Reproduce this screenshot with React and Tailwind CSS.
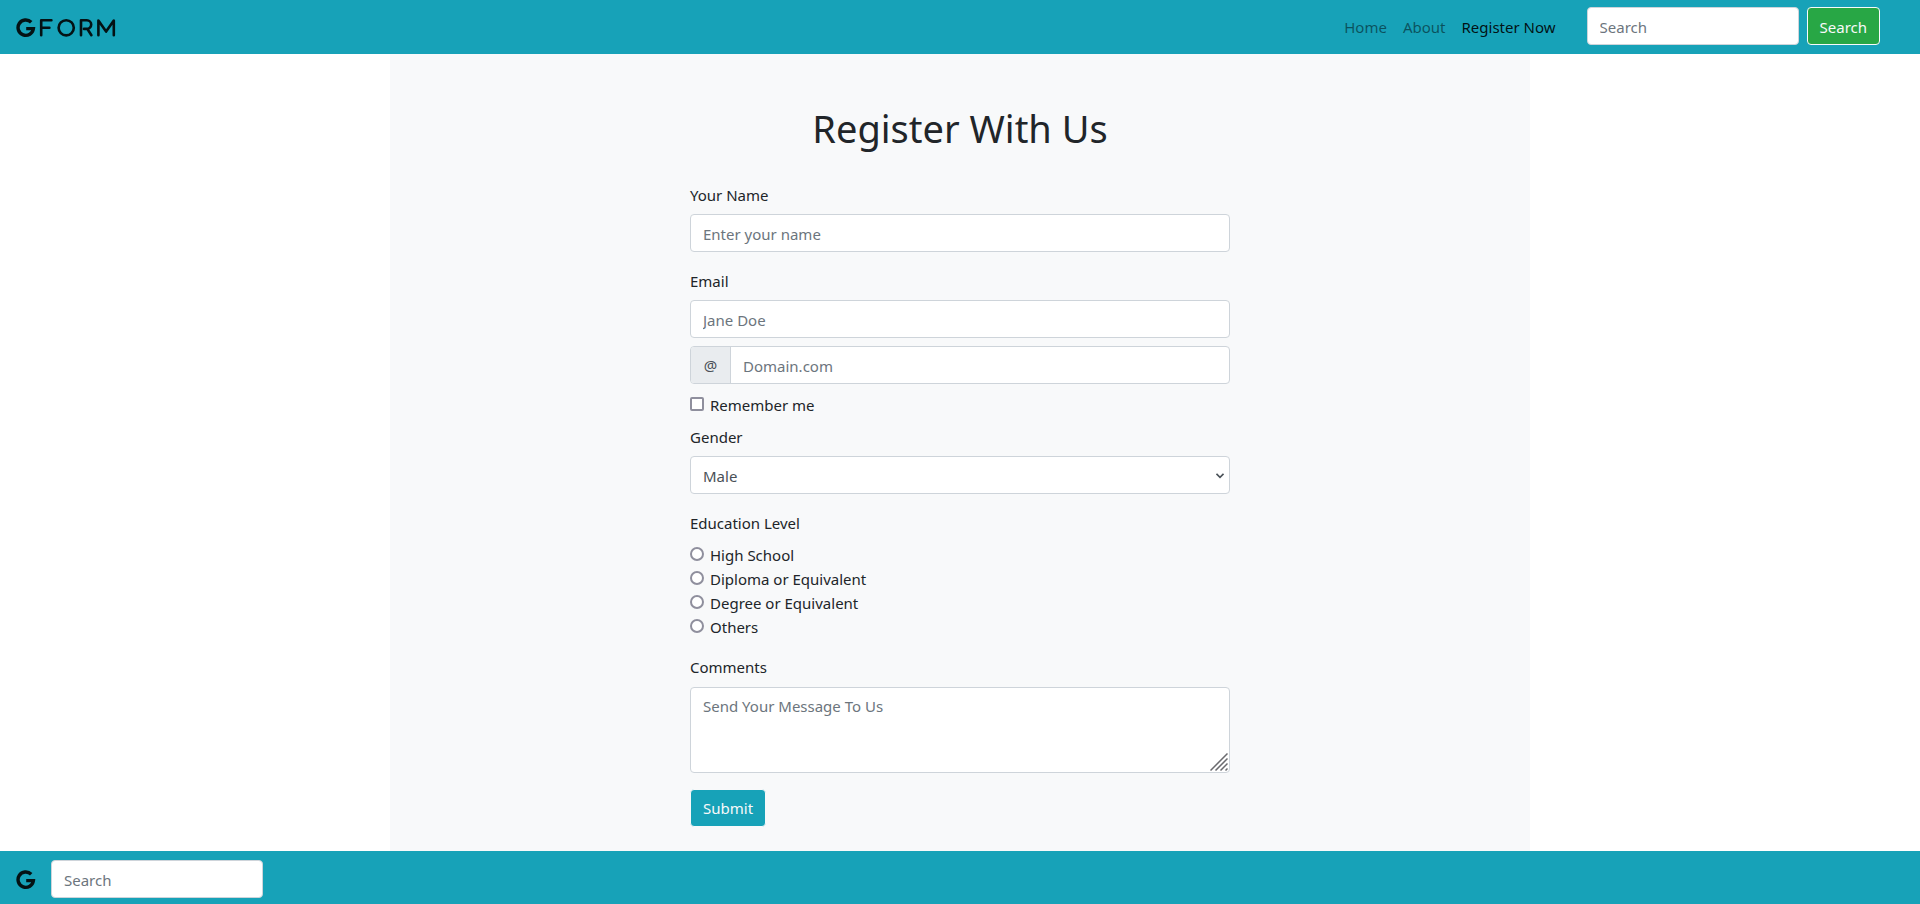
const control =
  'block w-full rounded border border-[#ced4da] bg-white px-3 pt-[7px] pb-[5px] h-[38px] text-[15px] leading-6 text-[#495057] placeholder:text-[#6c757d] placeholder:opacity-100';

const labelStyle = 'mb-[7px] block pt-px leading-6';

const levels = ['High School', 'Diploma or Equivalent', 'Degree or Equivalent', 'Others'];

function GMark() {
  return (
    <path
      d="M15.2 4.2A7.7 7.7 0 1 0 17.4 10.6H10.2"
      fill="none"
      stroke="#041214"
      strokeWidth="3.4"
    />
  );
}

function Logo() {
  return (
    <svg width="100" height="20" viewBox="0 0 100 20" role="img" aria-label="GForm">
      <GMark />
      <g fill="none" stroke="#041214" strokeWidth="2.6" strokeLinecap="round" strokeLinejoin="round">
        <path d="M35.4 2.3H25.2V17.2M25.2 9.8H33.4" />
        <circle cx="50.2" cy="9.8" r="7.6" />
        <path d="M65 17.2V2.3H70.9A4.2 4.2 0 0 1 70.9 10.9H68M71.6 11.2L75.4 17.2" />
        <path d="M82.4 17.2V2.6L90.1 13.6L97.8 2.6V17.2" />
      </g>
    </svg>
  );
}

export default function App() {
  return (
    <div className="flex min-h-screen flex-col bg-white font-['Noto_Sans','Open_Sans',sans-serif] text-[15px] leading-6 text-[#212529]">
      <header className="flex items-center justify-between bg-[#17a2b8] pt-[7px] pr-10 pb-[9px] pl-4">
        <a href="#home" aria-label="GForm home" className="pt-1">
          <Logo />
        </a>
        <div className="flex items-center">
          <nav className="mr-[31px] flex gap-4 pt-[2px]">
            <a href="#home" className="text-black/50">Home</a>
            <a href="#about" className="text-black/50">About</a>
            <a href="#register" className="text-black/90">Register Now</a>
          </nav>
          <form className="flex items-center gap-2">
            <div className="w-[212px]">
              <input type="search" aria-label="Search" placeholder="Search" className={control} />
            </div>
            <button
              type="button"
              className="h-[38px] rounded border border-[#f8f9fa] bg-[#28a745] px-3 pt-[2px] text-[#f8f9fa]"
            >
              Search
            </button>
          </form>
        </div>
      </header>

      <main className="mx-auto w-full max-w-[1140px] flex-1 bg-[#f8f9fa] pt-[50px] pb-6">
        <h1 className="mb-[30px] text-center text-[38px] leading-[48px]">Register With Us</h1>
        <form className="mx-auto w-full max-w-[540px]">
          <div className="mb-4">
            <label htmlFor="name" className={labelStyle}>Your Name</label>
            <input id="name" type="text" placeholder="Enter your name" className={control} />
          </div>

          <label htmlFor="email" className={labelStyle}>Email</label>
          <input id="email" type="text" placeholder="Jane Doe" className={control} />
          <div className="mt-2 flex h-[38px] overflow-hidden rounded border border-[#ced4da] bg-white">
            <label
              htmlFor="domain"
              className="flex w-10 items-center justify-center border-r border-[#ced4da] bg-[#e9ecef] text-[#495057]"
            >
              @
            </label>
            <input
              id="domain"
              type="text"
              placeholder="Domain.com"
              className="min-w-0 flex-1 px-3 pt-[2px] text-[15px] text-[#495057] placeholder:text-[#6c757d] placeholder:opacity-100"
            />
          </div>

          <div className="mt-2 mb-[7px] flex items-start gap-[6px]">
            <input
              id="remember"
              type="checkbox"
              className="mt-[5px] size-[14px] appearance-none rounded-[2px] border-2 border-[#8f8f9d] bg-white checked:bg-[#17a2b8]"
            />
            <label htmlFor="remember" className="pt-px">Remember me</label>
          </div>

          <label htmlFor="gender" className={labelStyle}>Gender</label>
          <div className="relative mb-4">
            <select id="gender" className={`${control} appearance-none`}>
              <option>Male</option>
              <option>Female</option>
            </select>
            <svg
              className="pointer-events-none absolute top-[17px] right-[6px]"
              width="8"
              height="6"
              viewBox="0 0 8 6"
              fill="none"
              stroke="#495057"
              strokeWidth="1.6"
            >
              <path d="M0.5 0.8L4 4.3L7.5 0.8" />
            </svg>
          </div>

          <fieldset className="mb-4">
            <legend className={labelStyle}>Education Level</legend>
            {levels.map((level) => (
              <div key={level} className="flex h-6 items-start gap-[6px]">
                <input
                  id={level}
                  type="radio"
                  name="education"
                  className="mt-[5px] size-[14px] appearance-none rounded-full border-2 border-[#8f8f9d] bg-white checked:bg-[#17a2b8]"
                />
                <label htmlFor={level} className="pt-px">{level}</label>
              </div>
            ))}
          </fieldset>

          <label htmlFor="comments" className="mb-2 block pt-px">Comments</label>
          <div className="relative mb-4">
            <textarea
              id="comments"
              placeholder="Send Your Message To Us"
              className="block h-[86px] w-full resize-none rounded border border-[#ced4da] bg-white px-3 py-[6px] leading-6 placeholder:text-[#6c757d] placeholder:opacity-100"
            />
            <svg
              className="pointer-events-none absolute right-[2px] bottom-[2px]"
              width="18"
              height="18"
              viewBox="0 0 18 18"
              stroke="#6b6b6f"
              strokeWidth="1.5"
            >
              <path d="M0.5 17.5L17.5 0.5M5.5 17.5L17.5 5.5M10.5 17.5L17.5 10.5M15.5 17.5L17.5 15.5" />
            </svg>
          </div>
          <button
            type="button"
            className="h-[38px] rounded border border-[#f8f9fa] bg-[#17a2b8] px-3 text-[#f8f9fa]"
          >
            Submit
          </button>
        </form>
      </main>

      <footer className="flex items-center gap-[15px] bg-[#17a2b8] px-4 pt-[9px] pb-[6px]">
        <a href="#home" aria-label="GForm home" className="pt-[2px]">
          <svg width="20" height="20" viewBox="0 0 20 20">
            <GMark />
          </svg>
        </a>
        <div className="w-[212px]">
          <input type="search" aria-label="Search" placeholder="Search" className={control} />
        </div>
      </footer>
    </div>
  );
}
